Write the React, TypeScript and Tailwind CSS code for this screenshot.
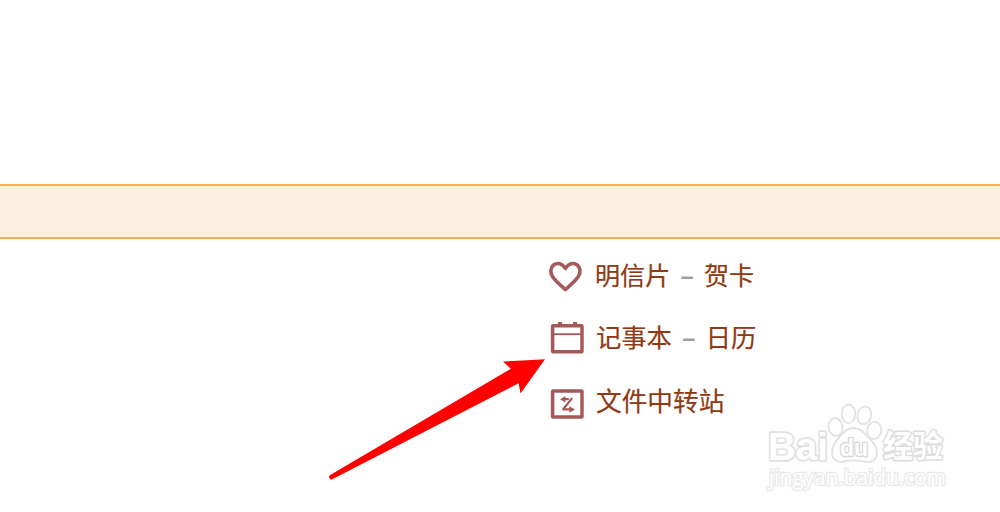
import React from "react";

type Item = {
  icon: React.ReactNode;
  label: string;
  extra?: string;
  className: string;
};

const HeartIcon = () => (
  <svg width="36" height="32" viewBox="0 0 36 32" fill="none">
    <path
      d="M18.4 29.6 C13 25 8.4 20.8 5.6 16.8 C2.6 12.4 3.6 7.4 6.6 5 C10.6 2 15.4 3.6 18.4 8.4 C21.4 3.6 26.2 2 30.2 5 C33.2 7.4 34.2 12.4 31.2 16.8 C28.4 20.8 23.8 25 18.4 29.6 Z"
      stroke="#a45a58"
      strokeWidth="3.6"
      strokeLinejoin="round"
    />
  </svg>
);

const CalendarIcon = () => (
  <svg className="mb-0.5" width="34" height="32" viewBox="0 0 34 32" fill="none">
    <path d="M8 0h4v3H8zM23 0h4v3h-4z" fill="#a45a58" />
    <rect x="2.6" y="3.8" width="29.4" height="26" rx="0.5" stroke="#a45a58" strokeWidth="3.5" />
    <path d="M3 12.2h28" stroke="#a45a58" strokeWidth="1.8" />
  </svg>
);

const TransferIcon = () => (
  <svg className="mt-1" width="34" height="32" viewBox="0 0 34 32" fill="none">
    <rect x="2.6" y="3" width="29.4" height="26" rx="0.5" stroke="#a45a58" strokeWidth="3.5" />
    <path d="M13 11.2h5M21.7 10.6L13.2 21.2M13.2 21.4h8" stroke="#a45a58" strokeWidth="2.2" strokeLinecap="round" />
    <path d="M10 11.2l5.4-3.2v6.4zM25 21.5l-5.6-3.2v6.4z" fill="#a45a58" />
  </svg>
);

const items: Item[] = [
  { icon: <HeartIcon />, label: "明信片", extra: "贺卡", className: "gap-3 text-[25.1px]" },
  { icon: <CalendarIcon />, label: "记事本", extra: "日历", className: "gap-3 pl-[3px] text-[25.3px]" },
  { icon: <TransferIcon />, label: "文件中转站", className: "gap-3 pl-[3px] pt-0.5 text-[25.7px]" },
];

const Arrow = () => (
  <svg className="absolute left-0 top-0" width="1000" height="512" viewBox="0 0 1000 512">
    <path
      d="M330.2 475.1 L510.8 368.8 L503 361.6 L545 359.2 L520.5 393.5 L518.6 383.2 L332.8 479 A2.3 2.3 0 0 1 330.2 475.1 Z"
      fill="#ff0000"
    />
  </svg>
);

const Watermark = () => (
  <svg
    className="absolute left-[760px] top-[398px] font-['Liberation_Sans','Noto_Sans_CJK_SC',sans-serif]"
    width="200"
    height="100"
    viewBox="760 398 200 100"
    fill="#ffffff"
    stroke="#e2e2e2"
    strokeWidth="1.8"
  >
    <ellipse cx="835.5" cy="427" rx="7" ry="9" transform="rotate(-8 835.5 427)" />
    <ellipse cx="848.5" cy="414" rx="6.8" ry="9.3" />
    <ellipse cx="864.3" cy="415.3" rx="6.8" ry="9" transform="rotate(12 864.3 415.3)" />
    <ellipse cx="874.2" cy="430.5" rx="7.2" ry="8.6" transform="rotate(10 874.2 430.5)" />
    <path d="M842 434 C849 426 858 426 865 434 C870 440 877 444 877 453 C877 460 871 463 864 461.5 C857 460 851 460 844 461.5 C837 463 832 459 832 453 C832 444 837 440 842 434Z" />
    <g paintOrder="stroke" strokeLinejoin="round" fontWeight="700">
      <text x="768" y="460" fontSize="39" strokeWidth="3.4" textLength="60" lengthAdjust="spacingAndGlyphs">Bai</text>
      <text x="840" y="455.5" fontSize="23" strokeWidth="2.6" stroke="#d6d6d6" textLength="28" lengthAdjust="spacingAndGlyphs">du</text>
      <text x="883" y="457" fontSize="31" strokeWidth="3" stroke="#dddddd" textLength="60" lengthAdjust="spacingAndGlyphs" className="font-['Noto_Sans_CJK_SC',sans-serif]">经验</text>
    </g>
    <text
      x="769"
      y="484.5"
      fontSize="21"
      strokeWidth="2.6"
      stroke="#e9e9e9"
      paintOrder="stroke"
      fontWeight="500"
      textLength="177"
      lengthAdjust="spacingAndGlyphs"
      className="font-['Open_Sans',sans-serif]"
    >
      jingyan.baidu.com
    </text>
  </svg>
);

export default function App() {
  return (
    <div className="relative h-[512px] w-[1000px] overflow-hidden bg-[#fefefe] pt-[184px] font-['Noto_Sans_CJK_SC',sans-serif]">
      <div className="h-[55px] border-y-2 border-[#f4b054] bg-[#fcf0df]" />

      <ul className="flex flex-col pl-[547px] pt-[6px]">
        {items.map((item) => (
          <li key={item.label} className={`flex h-[62.5px] items-center whitespace-nowrap text-[#8f3a12] ${item.className}`}>
            {item.icon}
            <span className="pb-[3px] [-webkit-text-stroke:0.2px_currentColor]">
              {item.label}
              {item.extra && (
                <>
                  <span className="mx-2.5 font-bold text-[#a09c9a]">–</span>
                  {item.extra}
                </>
              )}
            </span>
          </li>
        ))}
      </ul>

      <Arrow />
      <Watermark />
    </div>
  );
}
